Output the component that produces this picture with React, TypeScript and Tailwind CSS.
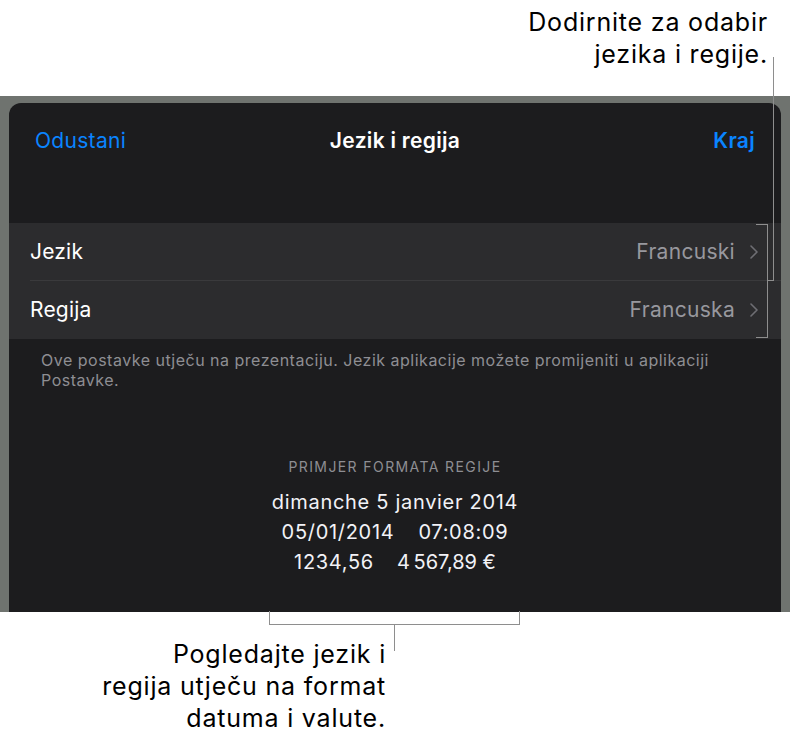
import React from "react";

const ROWS = [
  { label: "Jezik", value: "Francuski" },
  { label: "Regija", value: "Francuska" },
];

function Chevron() {
  return (
    <svg width="8" height="14" viewBox="0 0 8 14" fill="none" className="shrink-0">
      <polyline points="1,1 7,7 1,13" stroke="#6e6e73" strokeWidth="1.6" strokeLinecap="round" strokeLinejoin="round" />
    </svg>
  );
}

export default function App() {
  return (
    <div className="relative h-[745px] w-[790px] overflow-hidden bg-white font-['Inter',sans-serif]">
      {/* top callout */}
      <div className="flex h-[96px] justify-end pr-[22px] pt-[6px]">
        <p className="text-right text-[25px] leading-[32px] tracking-[0.8px] text-black">
          Dodirnite za odabir
          <br />
          jezika i regije.
        </p>
      </div>

      {/* gray band with sheet */}
      <div className="bg-[#6f736f] px-[9px] pt-[7px]">
        <div className="flex h-[509px] flex-col rounded-t-[12px] bg-[#1c1c1e]">
          <div className="grid h-[76px] grid-cols-[1fr_auto_1fr] items-center px-[26px] text-[21px] tracking-[0.3px]">
            <span className="justify-self-start text-[#0a84ff]">Odustani</span>
            <span className="font-semibold text-white">Jezik i regija</span>
            <span className="justify-self-end font-semibold text-[#0a84ff]">Kraj</span>
          </div>

          <div className="mt-[44px] bg-[#2c2c2e]">
            {ROWS.map((row, i) => (
              <div key={row.label} className="flex h-[58px] items-center pl-[21px]">
                <div
                  className={`flex h-full flex-1 items-center pr-[23px] ${
                    i === 0 ? "border-b border-[#3a3a3c]" : ""
                  }`}
                >
                  <span className="flex-1 text-[21px] tracking-[0.2px] text-white">{row.label}</span>
                  <span className="mr-[15px] text-[21px] tracking-[0.3px] text-[#98989e]">{row.value}</span>
                  <Chevron />
                </div>
              </div>
            ))}
          </div>

          <p className="mt-[11px] pl-[32px] text-[16px] leading-[20px] tracking-[0.5px] text-[#8e8e93]">
            Ove postavke utječu na prezentaciju. Jezik aplikacije možete promijeniti u aplikaciji
            <br />
            Postavke.
          </p>

          <div className="mt-[67px] flex flex-col items-center">
            <p className="text-[14px] leading-[20px] tracking-[1.4px] text-[#8e8e93]">PRIMJER FORMATA REGIJE</p>
            <div className="mt-[10px] text-center text-[20px] leading-[30px] tracking-[0.7px] text-[#f2f2f7]">
              <p>dimanche 5 janvier 2014</p>
              <p className="flex justify-center gap-[24px]">
                <span>05/01/2014</span>
                <span>07:08:09</span>
              </p>
              <p className="flex justify-center gap-[23px]">
                <span>1234,56</span>
                <span>4{"\u202F"}567,89 €</span>
              </p>
            </div>
          </div>
        </div>
      </div>

      {/* bottom callout */}
      <div className="flex justify-end pr-[404px] pt-[26px]">
        <p className="text-right text-[25px] leading-[32px] tracking-[0.8px] text-black">
          Pogledajte jezik i
          <br />
          regija utječu na format
          <br />
          datuma i valute.
        </p>
      </div>

      {/* callout lines */}
      <div className="absolute left-[773px] top-[57px] h-[224px] w-px bg-[#8e8e8e]" />
      <div className="absolute left-[767px] top-[280px] h-px w-[7px] bg-[#8e8e8e]" />
      <div className="absolute left-[756px] top-[224px] h-[114px] w-[12px] border-y border-r border-[#8e8e8e]" />
      <div className="absolute left-[269px] top-[611px] h-[14px] w-[251px] border-x border-b border-[#8e8e8e]" />
      <div className="absolute left-[394px] top-[624px] h-[27px] w-px bg-[#8e8e8e]" />
    </div>
  );
}
